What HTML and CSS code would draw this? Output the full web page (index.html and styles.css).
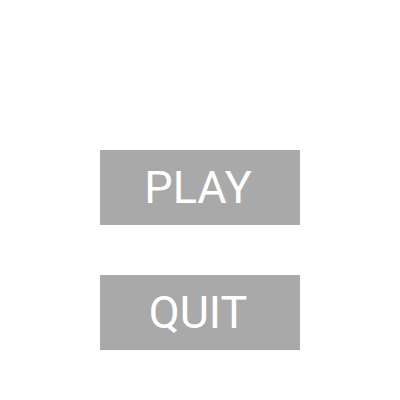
FILE: index.html
```html
<!DOCTYPE html>
<html>
<head>
<meta charset="utf-8">
<link rel="stylesheet" href="styles.css">
</head>
<body>
<div class="menu">
  <button class="btn">PLAY</button>
  <button class="btn">QUIT</button>
</div>
</body>
</html>
```
FILE: styles.css
```css
html, body {
  margin: 0;
  padding: 0;
  background: #ffffff;
}
.menu {
  display: flex;
  flex-direction: column;
  align-items: center;
  gap: 50px;
  padding-top: 150px;
}
.btn {
  width: 200px;
  height: 75px;
  border: none;
  padding: 0 4px 0 0;
  background: #a9a9a9;
  color: #ffffff;
  font-family: Roboto, sans-serif;
  font-size: 45px;
  line-height: 75px;
  display: flex;
  align-items: center;
  justify-content: center;
}
```
